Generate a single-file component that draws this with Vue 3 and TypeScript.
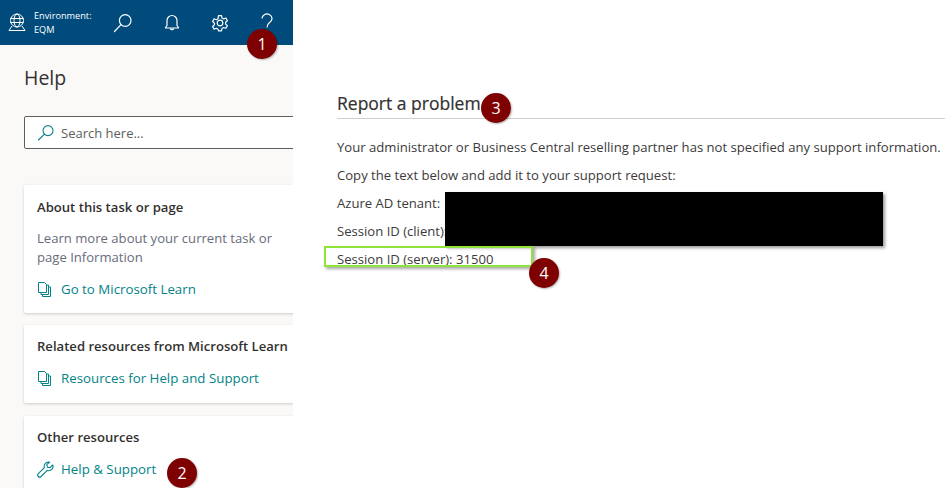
<script setup lang="ts">
interface Badge {
  n: number;
  cls: string;
}

const badges: Badge[] = [
  { n: 1, cls: "b1" },
  { n: 2, cls: "b2" },
  { n: 3, cls: "b3" },
  { n: 4, cls: "b4" },
];
</script>

<template>
  <div class="page">
    <aside class="side">
      <header class="topbar">
        <svg class="globe" width="18" height="20" viewBox="0 0 18 20" fill="none" stroke="#fff" stroke-width="1">
          <circle cx="9" cy="7.500" r="6.500" />
          <ellipse cx="9" cy="7.500" rx="3" ry="6.500" />
          <path d="M2.500 5.500h13M2.500 9.500h13M4 13 1 17.500h16L14 13" />
        </svg>
        <div class="env">
          <div>Environment:</div>
          <div>EQM</div>
        </div>
        <svg class="t-search" width="20" height="20" viewBox="0 0 20 20" fill="none" stroke="#fff" stroke-width="1.2">
          <circle cx="12.200" cy="7.500" r="5.800" />
          <path d="M8 11.700 1.500 18.500" stroke-linecap="round" />
        </svg>
        <svg class="t-bell" width="16" height="18" viewBox="0 0 16 18" fill="none" stroke="#fff" stroke-width="1.2">
          <path d="M1.500 14V13.500L3 11.500V6.500a5 5 0 0 1 10 0v5l1.500 2v.5z" stroke-linejoin="round" />
          <path d="M6.300 14.500a1.800 1.800 0 0 0 3.400 0" />
        </svg>
        <svg class="t-gear" width="18" height="18" viewBox="0 0 18 18" fill="none" stroke="#fff" stroke-width="1.2">
          <circle cx="9" cy="9" r="2.800" />
          <path d="M7.500 1h3l.5 2.400 1.600.9 2.300-.8 1.500 2.600-1.800 1.600v1.800l1.800 1.600-1.500 2.600-2.300-.8-1.600.9-.5 2.400h-3L7 14.600l-1.600-.9-2.300.8-1.500-2.600 1.800-1.600V8.500L1.600 6.900l1.500-2.600 2.300.8L7 4.200z" stroke-linejoin="round" transform="translate(0 .6)" />
        </svg>
        <svg class="t-help" width="12" height="20" viewBox="0 0 12 20" fill="none" stroke="#fff" stroke-width="1.200">
          <path d="M1 5.500a5 4.500 0 1 1 8 3.600C7 10.800 6 11.500 6 14.500" />
          <circle cx="6" cy="18" r=".9" fill="#fff" stroke="none" />
        </svg>
      </header>

      <div class="side-body">
        <h1 class="help-title">Help</h1>
        <div class="search">
          <svg width="18" height="18" viewBox="0 0 18 18" fill="none" stroke="#0f7f8c" stroke-width="1.100">
            <circle cx="11" cy="6.600" r="5" />
            <path d="M7.400 10.200 1.500 16" stroke-linecap="round" />
          </svg>
          <span>Search here...</span>
        </div>

        <section class="card about">
          <h2>About this task or page</h2>
          <p>Learn more about your current task or page Information</p>
          <a class="link">
            <svg width="14" height="15" viewBox="0 0 14 15" fill="none" stroke="#038387" stroke-width="1">
              <path d="M1.500.5h6l2 2v8h-8zM9.500 3h2v9.500h-7.500v-2M11.500 5h2v9.500h-8v-2" />
            </svg>
            Go to Microsoft Learn
          </a>
        </section>

        <section class="card related">
          <h2>Related resources from Microsoft Learn</h2>
          <a class="link">
            <svg width="14" height="15" viewBox="0 0 14 15" fill="none" stroke="#038387" stroke-width="1">
              <path d="M1.500.5h6l2 2v8h-8zM9.500 3h2v9.500h-7.500v-2M11.500 5h2v9.500h-8v-2" />
            </svg>
            Resources for Help and Support
          </a>
        </section>

        <section class="card other">
          <h2>Other resources</h2>
          <a class="link">
            <svg width="17" height="17" viewBox="0 0 17 17" fill="none" stroke="#038387" stroke-width="1.100" stroke-linejoin="round">
              <path d="M11.500 1a4.300 4.300 0 0 0-4.100 5.600L1.300 12.700a2 2 0 0 0 0 2.800 2 2 0 0 0 2.800 0l6.100-6.100A4.300 4.300 0 0 0 15.800 4l-2.900 2.700-2.500-.6-.6-2.500L12.600 1z" />
            </svg>
            Help &amp; Support
          </a>
        </section>
      </div>
    </aside>

    <main class="main">
      <h2 class="report-title">Report a problem</h2>
      <p>Your administrator or Business Central reselling partner has not specified any support information.</p>
      <p>Copy the text below and add it to your support request:</p>
      <p>Azure AD tenant:</p>
      <p>Session ID (client):</p>
      <p>Session ID (server): 31500</p>
    </main>

    <div class="redact"></div>
    <div class="highlight"></div>
    <span v-for="b in badges" :key="b.n" class="badge" :class="b.cls">{{ b.n }}</span>
  </div>
</template>

<style scoped>
.page {
  position: relative;
  display: flex;
  width: 945px;
  height: 488px;
  overflow: hidden;
  background: #fff;
  font-family: "Open Sans", "Noto Sans", sans-serif;
  color: #323130;
}
.side {
  width: 293px;
  flex: none;
  background: #faf9f8;
  overflow: hidden;
}
.topbar {
  display: flex;
  align-items: center;
  height: 45px;
  background: #004b7c;
  color: #fff;
  padding-left: 8px;
}
.globe {
  flex: none;
}
.env {
  margin-left: 8px;
  width: 79px;
  font-size: 9.200px;
  line-height: 14px;
  font-weight: 500;
}
.t-search {
  flex: none;
}
.t-bell {
  margin-left: 31px;
  flex: none;
}
.t-gear {
  margin-left: 31px;
  flex: none;
}
.t-help {
  margin-left: 32px;
  flex: none;
}
.side-body {
  padding: 21px 0 0 24px;
  width: 340px;
}
.help-title {
  margin: 0;
  font-size: 19.500px;
  line-height: 24px;
  font-weight: 400;
}
.search {
  display: flex;
  align-items: center;
  gap: 6px;
  height: 31px;
  margin-top: 26px;
  padding-left: 12px;
  background: #fff;
  border: 1px solid #605e5c;
  border-radius: 2px;
  font-size: 13px;
  color: #605e5c;
}
.card {
  background: #fff;
  border-radius: 2px;
  padding: 13px 13px 0;
  box-shadow: 0 1px 3px rgba(0, 0, 0, 0.18);
  box-sizing: border-box;
}
.card h2 {
  margin: 0;
  font-size: 13.100px;
  line-height: 18px;
  font-weight: 600;
  color: #323130;
}
.card p {
  margin: 13px 0 0;
  width: 250px;
  font-size: 13.100px;
  line-height: 19px;
  color: #686c7c;
}
.about {
  margin-top: 36px;
  height: 128px;
}
.related {
  margin-top: 12px;
  height: 78px;
  padding-top: 12px;
}
.other {
  margin-top: 13px;
  height: 90px;
  padding-top: 12px;
}
.link {
  display: flex;
  align-items: center;
  gap: 10px;
  font-size: 13.300px;
  line-height: 20px;
  color: #038387;
}
.about .link {
  margin-top: 12px;
}
.related .link {
  margin-top: 13px;
}
.other .link {
  margin-top: 13px;
  gap: 7px;
}
.main {
  flex: 1;
  padding: 92px 0 0 44px;
  min-width: 0;
}
.report-title {
  margin: 0 0 18px;
  padding-bottom: 3px;
  font-size: 17.500px;
  line-height: 23px;
  font-weight: 400;
  border-bottom: 1px solid #d2d0ce;
  -webkit-text-stroke: 0.2px #323130;
}
.main p {
  margin: 0 0 8px;
  font-size: 13.100px;
  line-height: 20px;
  white-space: nowrap;
  color: #3b3a39;
}
.redact {
  position: absolute;
  left: 445px;
  top: 192px;
  width: 438px;
  height: 54px;
  background: #000;
  box-shadow: 2px 2px 3px rgba(0, 0, 0, 0.4);
}
.highlight {
  position: absolute;
  left: 324px;
  top: 246px;
  width: 205px;
  height: 17px;
  border: 2px solid #8fe43a;
  box-shadow: 2px 2px 3px rgba(0, 0, 0, 0.35);
}
.badge {
  position: absolute;
  width: 30px;
  height: 30px;
  border-radius: 50%;
  background: #7f0000;
  color: #fff;
  font-size: 16px;
  line-height: 30px;
  text-align: center;
  box-shadow: 1px 1px 2px rgba(0, 0, 0, 0.3);
}
.b1 {
  left: 247px;
  top: 29px;
}
.b2 {
  left: 167px;
  top: 458px;
}
.b3 {
  left: 481px;
  top: 93px;
}
.b4 {
  left: 529px;
  top: 258px;
}
</style>
